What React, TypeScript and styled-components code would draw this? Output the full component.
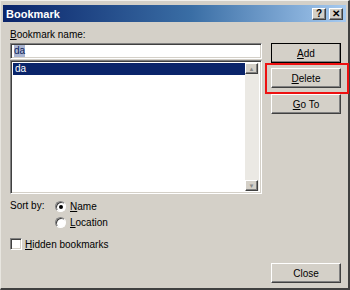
import React from 'react';
import styled, { createGlobalStyle, css } from 'styled-components';

const Global = createGlobalStyle`
  html, body { margin: 0; padding: 0; background: #d4d0c8; }
  body { font-family: Tahoma, "Liberation Sans", Arial, sans-serif; font-size: 10px; color: #000; }
`;

const Window = styled.div`
  width: 350px;
  height: 290px;
  box-sizing: border-box;
  background: #d4d0c8;
  border-top: 1px solid #f2f0ec;
  border-left: 1px solid #e8e6e0;
  border-right: 2px solid #404040;
  border-bottom: 2px solid #404040;
  padding: 4px 2px 1px 2px;
  display: flex;
  flex-direction: column;
`;

const TitleBar = styled.div`
  height: 17px;
  flex: none;
  display: flex;
  align-items: center;
  background: linear-gradient(to right, #0a246a 0%, #3a6ea5 55%, #a6caf0 100%);
  padding: 0 3px 0 3px;
`;

const Title = styled.div`
  flex: 1;
  color: #fff;
  font-weight: bold;
  font-size: 11px;
`;

const TitleButtons = styled.div`
  display: flex;
  gap: 3px;
`;

const bevel = css`
  box-sizing: border-box;
  background: #d4d0c8;
  border-style: solid;
  border-width: 1px;
  border-color: #ffffff #404040 #404040 #ffffff;
  box-shadow: inset -1px -1px #808080;
`;

const TitleButton = styled.div`
  ${bevel};
  width: 14px;
  height: 12px;
  display: flex;
  align-items: center;
  justify-content: center;
  font-weight: bold;
  font-size: 10px;
  line-height: 1;
  color: #000;
`;

const Body = styled.div`
  flex: 1;
  display: grid;
  grid-template-columns: 252px 70px;
  column-gap: 9px;
  padding: 6px 5px 4px 7px;
`;

const LeftCol = styled.div`
  display: flex;
  flex-direction: column;
`;

const RightCol = styled.div`
  display: flex;
  flex-direction: column;
  padding-top: 15px;
`;

const Label = styled.div`
  height: 13px;
  line-height: 13px;
  margin-bottom: 2px;
`;

const inset = css`
  box-sizing: border-box;
  background: #fff;
  border-style: solid;
  border-width: 1px;
  border-color: #808080 #ffffff #ffffff #808080;
  box-shadow: inset 1px 1px #404040, inset -1px -1px #d4d0c8;
`;

const Input = styled.div`
  ${inset};
  height: 16px;
  padding: 0 2px 0 3px;
  display: flex;
  align-items: center;
`;

const InputSel = styled.span`
  background: #aab5d2;
  color: #0c1f5c;
  line-height: 12px;
`;

const ListBox = styled.div`
  ${inset};
  margin-top: 1px;
  height: 134px;
  display: flex;
  padding: 2px;
`;

const ListItems = styled.div`
  flex: 1;
`;

const Item = styled.div<{ $selected?: boolean }>`
  height: 12px;
  line-height: 12px;
  padding-left: 2px;
  background: ${(p) => (p.$selected ? '#0a246a' : 'transparent')};
  color: ${(p) => (p.$selected ? '#fff' : '#000')};
`;

const ScrollBar = styled.div`
  width: 14px;
  display: flex;
  flex-direction: column;
  background: #ebe9e4;
`;

const ScrollBtn = styled.div`
  ${bevel};
  width: 13px;
  height: 11px;
  display: flex;
  align-items: center;
  justify-content: center;
  color: #8a8a8a;
  font-size: 6px;
  line-height: 1;
`;

const Spacer = styled.div`
  flex: 1;
`;

const SortGroup = styled.div`
  margin-top: 6px;
  display: grid;
  grid-template-columns: 45px auto;
  row-gap: 4px;
`;

const OptionRow = styled.label`
  display: flex;
  align-items: center;
  height: 12px;
  gap: 4px;
`;

const SortLabel = styled.div`
  height: 12px;
  line-height: 12px;
`;

const Radio = styled.span<{ $checked?: boolean }>`
  box-sizing: border-box;
  width: 11px;
  height: 11px;
  border-radius: 50%;
  background: #fff;
  border: 1px solid;
  border-color: #808080 #ffffff #ffffff #808080;
  box-shadow: inset 1px 1px #404040;
  position: relative;
  ${(p) =>
    p.$checked &&
    css`
      &::after {
        content: '';
        position: absolute;
        left: 3px;
        top: 3px;
        width: 4px;
        height: 4px;
        border-radius: 50%;
        background: #000;
      }
    `}
`;

const CheckRow = styled.label`
  margin-top: 10px;
  display: flex;
  align-items: center;
  gap: 3px;
  height: 12px;
`;

const CheckBox = styled.span`
  ${inset};
  width: 12px;
  height: 12px;
`;

const Button = styled.div<{ $default?: boolean }>`
  ${bevel};
  width: 70px;
  height: 20px;
  display: flex;
  align-items: center;
  justify-content: center;
  ${(p) =>
    p.$default &&
    css`
      outline: 1px solid #000;
      outline-offset: -1px;
    `}
`;

const Highlight = styled.div`
  position: relative;
  margin-top: 5px;
  margin-bottom: 6px;
  &::before {
    content: '';
    position: absolute;
    left: -6px;
    right: -8px;
    top: -5px;
    bottom: -6px;
    border: 2px solid #ee1111;
    pointer-events: none;
  }
`;

const U = styled.span`
  text-decoration: underline;
`;

export default function App() {
  return (
    <>
      <Global />
      <Window>
        <TitleBar>
          <Title>Bookmark</Title>
          <TitleButtons>
            <TitleButton>?</TitleButton>
            <TitleButton>✕</TitleButton>
          </TitleButtons>
        </TitleBar>
        <Body>
          <LeftCol>
            <Label>
              <U>B</U>ookmark name:
            </Label>
            <Input>
              <InputSel>da</InputSel>
            </Input>
            <ListBox>
              <ListItems>
                <Item $selected>da</Item>
              </ListItems>
              <ScrollBar>
                <ScrollBtn>▲</ScrollBtn>
                <Spacer />
                <ScrollBtn>▼</ScrollBtn>
              </ScrollBar>
            </ListBox>
            <SortGroup>
              <SortLabel>Sort by:</SortLabel>
              <OptionRow>
                <Radio $checked />
                <span>
                  <U>N</U>ame
                </span>
              </OptionRow>
              <span />
              <OptionRow>
                <Radio />
                <span>
                  <U>L</U>ocation
                </span>
              </OptionRow>
            </SortGroup>
            <CheckRow>
              <CheckBox />
              <span>
                <U>H</U>idden bookmarks
              </span>
            </CheckRow>
          </LeftCol>
          <RightCol>
            <Button $default>
              <span>
                <U>A</U>dd
              </span>
            </Button>
            <Highlight>
              <Button>
                <span>
                  <U>D</U>elete
                </span>
              </Button>
            </Highlight>
            <Button>
              <span>
                <U>G</U>o To
              </span>
            </Button>
            <Spacer />
            <Button>Close</Button>
          </RightCol>
        </Body>
      </Window>
    </>
  );
}
